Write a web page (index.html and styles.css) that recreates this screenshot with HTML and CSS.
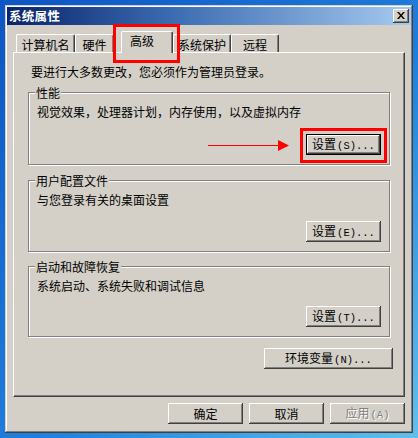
FILE: index.html
```html
<!DOCTYPE html>
<html lang="zh-CN">
<head>
<meta charset="utf-8">
<title>系统属性</title>
<link rel="stylesheet" href="styles.css">
</head>
<body>
<div class="window">
  <div class="titlebar">
    <span class="title">系统属性</span>
    <button class="close" aria-label="关闭">
      <svg width="8" height="7" viewBox="0 0 8 7"><path d="M0 0h2l2 2.5L6 0h2L5 3.5 8 7H6L4 4.5 2 7H0l3-3.5z" fill="#000"/></svg>
    </button>
  </div>
  <div class="tabs">
    <div class="tab t1">计算机名</div>
    <div class="tab t2">硬件</div>
    <div class="tab active">高级</div>
    <div class="tab t4">系统保护</div>
    <div class="tab t5">远程</div>
  </div>
  <div class="panel">
    <p class="intro">要进行大多数更改，您必须作为管理员登录。</p>
    <div class="group g1">
      <span class="legend">性能</span>
      <p class="desc">视觉效果，处理器计划，内存使用，以及虚拟内存</p>
      <button class="btn small default">设置<span class="acc">(S)...</span></button>
    </div>
    <div class="group g2">
      <span class="legend">用户配置文件</span>
      <p class="desc">与您登录有关的桌面设置</p>
      <button class="btn small">设置<span class="acc">(E)...</span></button>
    </div>
    <div class="group g3">
      <span class="legend">启动和故障恢复</span>
      <p class="desc">系统启动、系统失败和调试信息</p>
      <button class="btn small">设置<span class="acc">(T)...</span></button>
    </div>
    <button class="btn env">环境变量<span class="acc">(N)...</span></button>
  </div>
  <div class="actions">
    <button class="btn small">确定</button>
    <button class="btn small">取消</button>
    <button class="btn small disabled">应用<span class="acc">(A)</span></button>
  </div>

  <div class="mark mark-tab"></div>
  <div class="mark mark-btn"></div>
  <svg class="arrow" width="82" height="13" viewBox="0 0 82 13">
    <line x1="0" y1="6.5" x2="72" y2="6.5" stroke="#f00" stroke-width="1"/>
    <polygon points="70,1 81,6.5 70,12" fill="#f00"/>
  </svg>
</div>
</body>
</html>
```

FILE: styles.css
```css
html, body {
  margin: 0;
  height: 438px;
  overflow: hidden;
}
body {
  padding: 5px 0 0 5px;
  box-sizing: border-box;
  background: linear-gradient(135deg, #0d55c4 0%, #1f7fdc 55%, #5fc0ef 100%);
  font-family: "Noto Sans CJK SC", "Noto Sans", sans-serif;
  font-size: 12px;
  color: #000;
}
p { margin: 0; }

.window {
  position: relative;
  width: 408px;
  height: 428px;
  box-sizing: border-box;
  padding: 2px;
  background: #d4d0c8;
  box-shadow: inset -1px -1px #404040, inset 1px 1px #d4d0c8, inset -2px -2px #808080, inset 2px 2px #fff;
}

.titlebar {
  height: 18px;
  display: flex;
  align-items: center;
  justify-content: space-between;
  padding: 0 2px 0 2px;
  background: linear-gradient(to right, #0a246a 0%, #3a6ab0 40%, #a6caf0 100%);
}
.title {
  color: #fff;
  font-weight: bold;
  font-size: 12.5px;
  line-height: 14px;
  letter-spacing: 0.3px;
}
.close {
  width: 16px;
  height: 14px;
  padding: 0;
  border: 0;
  background: #d4d0c8;
  display: flex;
  align-items: center;
  justify-content: center;
  box-shadow: inset -1px -1px #404040, inset 1px 1px #fff, inset -2px -2px #808080;
}
.close svg { display: block; margin: 0 1px 1px 0; }

.tabs {
  margin-top: 6px;
  height: 21px;
  padding-left: 9px;
  display: flex;
  align-items: flex-end;
}
.tab {
  box-sizing: border-box;
  height: 18px;
  line-height: 14px;
  padding-top: 3px;
  text-align: center;
  border-top: 1px solid #fff;
  border-left: 1px solid #fff;
  border-right: 1px solid #404040;
  box-shadow: inset -1px 0 #808080;
  border-radius: 2px 2px 0 0;
  background: #d4d0c8;
}
.t1 { width: 59px; }
.t2 { width: 39px; }
.t4 { width: 58px; }
.t5 { width: 48px; }
.tab.active {
  position: relative;
  z-index: 1;
  width: 52px;
  height: 22px;
  margin-left: 7px;
  margin-bottom: -1px;
  padding-top: 2px;
  padding-left: 8px;
  text-align: left;
}

.panel {
  box-sizing: border-box;
  margin-left: 6px;
  width: 392px;
  height: 345px;
  border: 1px solid;
  border-color: #fff #404040 #404040 #fff;
  box-shadow: inset -1px -1px #808080;
  display: flex;
  flex-direction: column;
  align-items: flex-start;
}
.intro {
  margin: 12px 0 0 17px;
  line-height: 14px;
}

.group {
  box-sizing: border-box;
  width: 362px;
  margin-left: 14px;
  border: 1px solid #808080;
  box-shadow: inset 1px 1px #fff, 1px 1px #fff;
  display: flex;
  flex-direction: column;
  align-items: flex-start;
}
.g1 { margin-top: 13px; height: 73px; }
.g2 { margin-top: 15px; height: 72px; }
.g3 { margin-top: 14px; height: 71px; }
.legend {
  margin: -7px 0 0 6px;
  padding: 0 1px;
  line-height: 14px;
  background: #d4d0c8;
}
.desc {
  margin: 5px 0 0 8px;
  line-height: 14px;
}
.group .btn {
  margin-top: auto;
  margin-bottom: 9px;
  align-self: flex-end;
  margin-right: 8px;
}

.btn {
  box-sizing: border-box;
  height: 21px;
  padding: 0;
  border: 0;
  background: #d4d0c8;
  font-family: "Noto Sans CJK SC", "Noto Sans", sans-serif;
  font-size: 12px;
  line-height: 14px;
  color: #000;
  box-shadow: inset -1px -1px #404040, inset 1px 1px #fff, inset -2px -2px #808080;
}
.btn.small { width: 75px; }
.btn.default {
  box-shadow: inset 0 0 0 1px #000, inset -2px -2px #404040, inset 2px 2px #fff, inset -3px -3px #808080;
}
.acc {
  font-family: "Liberation Mono", monospace;
  font-size: 10.5px;
  margin-left: 1px;
}
.btn.env {
  width: 129px;
  margin-top: 11px;
  align-self: flex-end;
  margin-right: 11px;
}
.btn.disabled {
  color: #808080;
  text-shadow: 1px 1px #fff;
}

.actions {
  margin-top: 6px;
  padding-right: 6px;
  display: flex;
  justify-content: flex-end;
  gap: 6px;
}

.mark {
  position: absolute;
  box-sizing: border-box;
  border: 3px solid #f00;
  pointer-events: none;
}
.mark-tab { left: 108px; top: 19px; width: 67px; height: 39px; z-index: 2; }
.mark-btn { left: 295px; top: 123px; width: 87px; height: 35px; }
.arrow { position: absolute; left: 203px; top: 134px; }
```
